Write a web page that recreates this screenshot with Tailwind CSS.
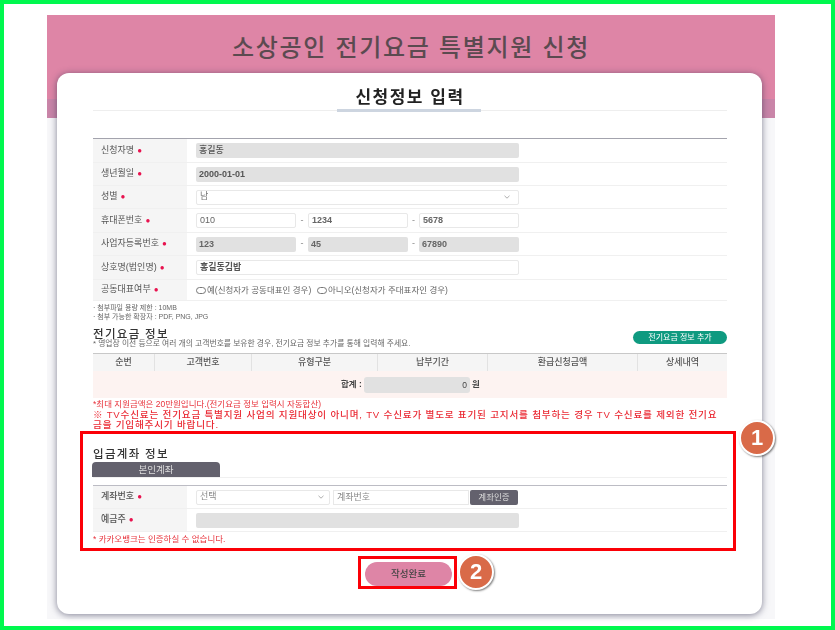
<!DOCTYPE html>
<html lang="ko">
<head>
  <meta charset="UTF-8" />
  <meta name="viewport" content="width=device-width, initial-scale=1.0"/>
  <title>소상공인 전기요금 특별지원 신청</title>
  <script src="https://cdn.jsdelivr.net/npm/@tailwindcss/browser@4"></script>
</head>
<body class="bg-white">
  <div class="relative w-[835px] h-[630px] overflow-hidden border-4 border-[#00f84e] bg-white font-['Liberation_Sans','Noto_Sans_CJK_KR',sans-serif] text-[#444]">
    <div class="ml-[43px] mt-[11px] w-[728px] h-[604px] bg-[#f7f7f9] blur-[0.4px]">

      <!-- 상단 헤더 -->
      <div class="h-[103px] bg-[#de85a6] border-b-[19px] border-[#c985a8]">
        <h1 class="pt-[19px] text-center text-[24px] leading-[28px] text-[#5b4a50] font-medium tracking-[1.7px]">소상공인 전기요금 특별지원 신청</h1>
      </div>

      <!-- 본문 카드 -->
      <div class="ml-[10px] -mt-[45px] w-[705px] h-[541px] relative bg-white rounded-xl shadow-[0_1px_7px_rgba(50,50,80,0.6)] pl-[36px] pr-[35px]">
        <div class="h-[38px] border-b border-[#eeeeee] relative text-center">
          <h2 class="pt-[15px] text-[17px] leading-[20px] font-bold text-[#222] tracking-[1.5px]">신청정보 입력</h2>
          <div class="absolute left-[244px] top-[36px] w-[144px] h-[3px] bg-[#cdd5e0]"></div>
        </div>

        <!-- 신청자 정보 -->
        <div class="mt-[27px] border-t border-[#a3a3ad] text-[9px] text-[#555]">
          <div class="flex h-[24px] border-b border-[#f0f0f0]">
            <div class="w-[94px] bg-[#f5f5f5] pl-[8px] flex items-center gap-[3px]">신청자명 <span class="text-[#e8134f] text-[8px]">●</span></div>
            <div class="flex-1 pl-[9px] flex items-center">
              <div class="w-[323px] h-[15px] bg-[#e1e1e1] rounded-[2px] pl-[3px] leading-[15px] font-medium">홍길동</div>
            </div>
          </div>
          <div class="flex h-[23px] border-b border-[#f0f0f0]">
            <div class="w-[94px] bg-[#f5f5f5] pl-[8px] flex items-center gap-[3px]">생년월일 <span class="text-[#e8134f] text-[8px]">●</span></div>
            <div class="flex-1 pl-[9px] flex items-center">
              <div class="w-[323px] h-[15px] bg-[#e1e1e1] rounded-[2px] pl-[3px] leading-[15px] font-bold">2000-01-01</div>
            </div>
          </div>
          <div class="flex h-[23px] border-b border-[#f0f0f0]">
            <div class="w-[94px] bg-[#f5f5f5] pl-[8px] flex items-center gap-[3px]">성별 <span class="text-[#e8134f] text-[8px]">●</span></div>
            <div class="flex-1 pl-[9px] flex items-center">
              <div class="w-[323px] h-[15px] border border-[#e8e8e8] rounded-[2px] pl-[3px] pr-[8px] flex items-center justify-between text-[#777]">
                <span>남</span>
                <svg width="6" height="4" viewBox="0 0 6 4" fill="none" stroke="#999" stroke-width="0.8"><path d="M0.5 0.8 L3 3.2 L5.5 0.8"/></svg>
              </div>
            </div>
          </div>
          <div class="flex h-[24px] border-b border-[#f0f0f0]">
            <div class="w-[94px] bg-[#f5f5f5] pl-[8px] flex items-center gap-[3px]">휴대폰번호 <span class="text-[#e8134f] text-[8px]">●</span></div>
            <div class="flex-1 pl-[9px] flex items-center text-[#666]">
              <div class="w-[100px] h-[15px] border border-[#e8e8e8] rounded-[2px] pl-[3px] leading-[13px]">010</div>
              <div class="w-[12px] text-center text-[#888]">-</div>
              <div class="w-[100px] h-[15px] border border-[#e8e8e8] rounded-[2px] pl-[3px] leading-[13px] font-bold">1234</div>
              <div class="w-[11px] text-center text-[#888]">-</div>
              <div class="w-[100px] h-[15px] border border-[#e8e8e8] rounded-[2px] pl-[3px] leading-[13px] font-bold">5678</div>
            </div>
          </div>
          <div class="flex h-[23px] border-b border-[#f0f0f0]">
            <div class="w-[94px] bg-[#f5f5f5] pl-[8px] flex items-center gap-[3px]">사업자등록번호 <span class="text-[#e8134f] text-[8px]">●</span></div>
            <div class="flex-1 pl-[9px] flex items-center text-[#666]">
              <div class="w-[100px] h-[15px] bg-[#e1e1e1] rounded-[2px] pl-[3px] leading-[15px] font-bold">123</div>
              <div class="w-[12px] text-center text-[#888]">-</div>
              <div class="w-[100px] h-[15px] bg-[#e1e1e1] rounded-[2px] pl-[3px] leading-[15px] font-bold">45</div>
              <div class="w-[11px] text-center text-[#888]">-</div>
              <div class="w-[100px] h-[15px] bg-[#e1e1e1] rounded-[2px] pl-[3px] leading-[15px] font-bold">67890</div>
            </div>
          </div>
          <div class="flex h-[24px] border-b border-[#f0f0f0]">
            <div class="w-[94px] bg-[#f5f5f5] pl-[8px] flex items-center gap-[3px]">상호명(법인명) <span class="text-[#e8134f] text-[8px]">●</span></div>
            <div class="flex-1 pl-[9px] flex items-center">
              <div class="w-[323px] h-[15px] border border-[#e8e8e8] rounded-[2px] pl-[3px] leading-[13px] font-bold">홍길동김밥</div>
            </div>
          </div>
          <div class="flex h-[21px] border-b border-[#f0f0f0]">
            <div class="w-[94px] bg-[#f5f5f5] pl-[8px] flex items-center gap-[3px]">공동대표여부 <span class="text-[#e8134f] text-[8px]">●</span></div>
            <div class="flex-1 pl-[9px] flex items-center text-[8.5px] text-[#666]">
              <span class="w-[10px] h-[7px] rounded-full border border-[#777] mr-[1px]"></span>
              <span class="w-[110px] whitespace-nowrap">예(신청자가 공동대표인 경우)</span>
              <span class="w-[10px] h-[7px] rounded-full border border-[#777] mr-[1px]"></span>
              <span class="whitespace-nowrap">아니오(신청자가 주대표자인 경우)</span>
            </div>
          </div>
        </div>

        <div class="mt-[2px] text-[7px] leading-[9px] text-[#666]">
          <p>· 첨부파일 용량 제한 : 10MB</p>
          <p>· 첨부 가능한 확장자 : PDF, PNG, JPG</p>
        </div>

        <!-- 전기요금 정보 -->
        <div class="relative mt-[7px] h-[25px]">
          <h3 class="text-[11.5px] leading-[12px] font-medium text-[#333] tracking-[1.3px]">전기요금 정보</h3>
          <p class="text-[7.8px] leading-[8px] text-[#666]">* 영업장 이전 등으로 여러 개의 고객번호를 보유한 경우, 전기요금 정보 추가를 통해 입력해 주세요.</p>
          <button class="absolute right-0 top-[3px] w-[94px] h-[13px] rounded-full bg-[#0f9a80] text-white text-[8px] leading-[13px]">전기요금 정보 추가</button>
        </div>
        <div class="flex h-[18px] bg-[#f5f5f5] border-t border-[#c8c8c8] text-[9px] leading-[17px] text-center text-[#555] font-medium">
          <div class="w-[62px] border-r border-[#e2e2e2]">순번</div>
          <div class="w-[97px] border-r border-[#e2e2e2]">고객번호</div>
          <div class="w-[126px] border-r border-[#e2e2e2]">유형구분</div>
          <div class="w-[110px] border-r border-[#e2e2e2]">납부기간</div>
          <div class="w-[150px] border-r border-[#e2e2e2]">환급신청금액</div>
          <div class="flex-1">상세내역</div>
        </div>
        <div class="h-[27px] bg-[#fdf3f1] flex items-center text-[8.5px] font-bold text-[#444]">
          <span class="ml-[248px] w-[23px] whitespace-nowrap">합계 :</span>
          <div class="w-[106px] h-[16px] bg-[#e1e1e1] rounded-[3px] text-right pr-[3px] leading-[16px] font-normal">0</div>
          <span class="ml-[2px]">원</span>
        </div>
        <p class="mt-[1px] text-[8.5px] leading-[10px] text-[#e8333c]">*최대 지원금액은 20만원입니다.(전기요금 정보 입력시 자동합산)</p>
        <p class="mt-[1px] text-[9.6px] leading-[10px] tracking-[0.8px] font-medium text-[#ea2a34] whitespace-nowrap">※ TV수신료는 전기요금 특별지원 사업의 지원대상이 아니며, TV 수신료가 별도로 표기된 고지서를 첨부하는 경우 TV 수신료를 제외한 전기요<br/>금을 기입해주시기 바랍니다.</p>

        <!-- 입금계좌 정보 -->
        <h3 class="mt-[17px] text-[11.5px] leading-[14px] font-medium text-[#333] tracking-[1.3px]">입금계좌 정보</h3>
        <div class="border-b border-[#f0f0f0]">
          <div class="-ml-[1px] mt-[1px] w-[128px] h-[15px] rounded-t-[4px] bg-[#63616d] text-center text-[9.5px] leading-[16px] text-[#ddd]">본인계좌</div>
        </div>
        <div class="mt-[7px] border-t border-[#bcbcc4] text-[9px] text-[#555]">
          <div class="flex h-[23px] border-b border-[#f0f0f0]">
            <div class="w-[94px] bg-[#f5f5f5] pl-[8px] flex items-center gap-[3px] font-medium">계좌번호 <span class="text-[#e8134f] text-[8px]">●</span></div>
            <div class="flex-1 pl-[9px] flex items-center gap-[3px] text-[#888]">
              <div class="w-[134px] h-[15px] border border-[#e8e8e8] rounded-[2px] pl-[3px] pr-[5px] flex items-center justify-between">
                <span>선택</span>
                <svg width="6" height="4" viewBox="0 0 6 4" fill="none" stroke="#999" stroke-width="0.8"><path d="M0.5 0.8 L3 3.2 L5.5 0.8"/></svg>
              </div>
              <div class="w-[136px] h-[15px] border border-[#e8e8e8] pl-[3px] leading-[13px]">계좌번호</div>
              <button class="-ml-[2px] w-[48px] h-[15px] rounded-[2px] bg-[#63616d] text-[#ddd] text-[8.5px] leading-[15px]">계좌인증</button>
            </div>
          </div>
          <div class="flex h-[23px] border-b border-[#f0f0f0]">
            <div class="w-[94px] bg-[#f5f5f5] pl-[8px] flex items-center gap-[3px] font-medium">예금주 <span class="text-[#e8134f] text-[8px]">●</span></div>
            <div class="flex-1 pl-[9px] flex items-center">
              <div class="w-[323px] h-[15px] bg-[#e1e1e1] rounded-[2px]"></div>
            </div>
          </div>
        </div>
        <p class="mt-[2px] text-[8.5px] leading-[10px] text-[#e8333c]">* 카카오뱅크는 인증하실 수 없습니다.</p>

        <div class="mt-[18px] flex justify-center">
          <button class="-ml-[3px] w-[87px] h-[24px] rounded-full bg-[#de85a6] text-[9.5px] font-medium text-[#444]">작성완료</button>
        </div>
      </div>
    </div>

    <!-- 안내 표시 -->
    <div class="absolute left-[76px] top-[427px] w-[656px] h-[120px] border-[3px] border-[#fb0007]"></div>
    <div class="absolute left-[354px] top-[552px] w-[99px] h-[33px] border-[3px] border-[#fb0007]"></div>
    <div class="absolute left-[735px] top-[416px] w-[36px] h-[36px] rounded-full bg-[#d96a48] border-2 border-white shadow-[1px_1px_2px_rgba(0,0,0,0.5)] text-white text-[22px] font-bold leading-[32px] text-center">1</div>
    <div class="absolute left-[454px] top-[550px] w-[36px] h-[36px] rounded-full bg-[#d96a48] border-2 border-white shadow-[1px_1px_2px_rgba(0,0,0,0.5)] text-white text-[22px] font-bold leading-[32px] text-center">2</div>
  </div>
</body>
</html>
